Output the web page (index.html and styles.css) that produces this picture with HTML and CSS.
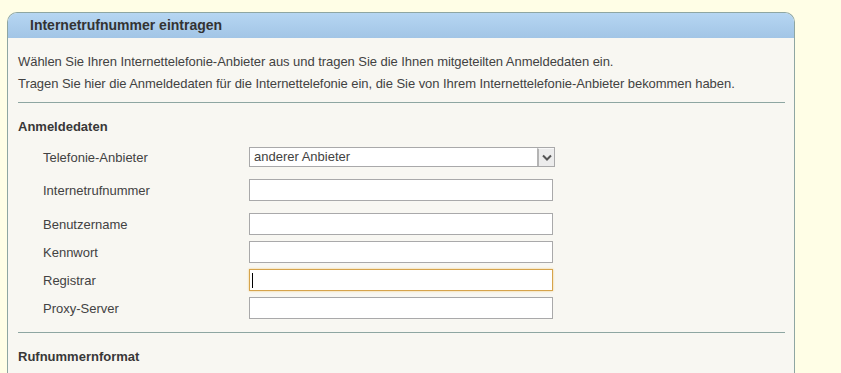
FILE: index.html
```html
<!DOCTYPE html>
<html lang="de">
<head>
    <meta charset="UTF-8">
    <title>Internetrufnummer eintragen</title>
    <link rel="stylesheet" href="styles.css">
</head>
<body>
    <div class="panel">
        <div class="panel-header">
            <h2>Internetrufnummer eintragen</h2>
        </div>
        <div class="panel-body">
            <p class="intro">
                Wählen Sie Ihren Internettelefonie-Anbieter aus und tragen Sie die Ihnen mitgeteilten Anmeldedaten ein.<br>
                Tragen Sie hier die Anmeldedaten für die Internettelefonie ein, die Sie von Ihrem Internettelefonie-Anbieter bekommen haben.
            </p>

            <hr>

            <h3>Anmeldedaten</h3>
            <div class="form-rows">
                <div class="row row-wide">
                    <label>Telefonie-Anbieter</label>
                    <div class="select">
                        <span class="select-value">anderer Anbieter</span>
                        <span class="select-arrow">
                            <svg width="10" height="7" viewBox="0 0 10 7">
                                <path d="M1 1.5 L5 5.5 L9 1.5" fill="none" stroke="#555" stroke-width="2"/>
                            </svg>
                        </span>
                    </div>
                </div>
                <div class="row row-wide">
                    <label>Internetrufnummer</label>
                    <input type="text">
                </div>
                <div class="row">
                    <label>Benutzername</label>
                    <input type="text">
                </div>
                <div class="row">
                    <label>Kennwort</label>
                    <input type="password">
                </div>
                <div class="row">
                    <label>Registrar</label>
                    <div class="focus-wrap">
                        <input type="text" class="focused">
                    </div>
                </div>
                <div class="row">
                    <label>Proxy-Server</label>
                    <input type="text">
                </div>
            </div>

            <hr>

            <h3>Rufnummernformat</h3>
        </div>
    </div>
</body>
</html>
```

FILE: styles.css
```css
* {
    margin: 0;
    padding: 0;
    box-sizing: border-box;
}

body {
    font-family: "Liberation Sans", Arial, sans-serif;
    font-size: 13px;
    color: #424242;
    background: #fffee6;
    height: 373px;
    overflow: hidden;
}

.panel {
    width: 788px;
    margin: 12px 0 0 7px;
    border: 1px solid #8ea6a2;
    border-bottom: none;
    border-radius: 10px 10px 0 0;
    background: #f8f7f2;
}

.panel-header {
    height: 25px;
    border-radius: 9px 9px 0 0;
    background: linear-gradient(#b6d6f2, #a2c5e6);
    padding-left: 22px;
}

.panel-header h2 {
    font-size: 14px;
    line-height: 25px;
    color: #333;
}

.panel-body {
    padding: 13px 9px 20px 10px;
}

.intro {
    line-height: 22px;
    letter-spacing: -0.05px;
}

hr {
    border: none;
    border-top: 1px solid #8ea6a2;
    margin-top: 7px;
}

h3 {
    font-size: 13px;
    line-height: 18px;
    margin-top: 15px;
    color: #383838;
}

.form-rows {
    margin-top: 11px;
    margin-bottom: 13px;
}

.row {
    display: flex;
    align-items: center;
    margin-bottom: 6px;
}

.row-wide {
    margin-bottom: 12px;
}

.row label {
    width: 231px;
    padding-left: 25px;
}

input {
    width: 304px;
    height: 22px;
    border: 1px solid #a9a9aa;
    background: #fff;
    font: inherit;
    outline: none;
}

.focus-wrap {
    position: relative;
}

.focused {
    border-color: #d6a44c;
    box-shadow: 0 0 2px #f2cc80;
}

.focus-wrap::after {
    content: "";
    position: absolute;
    left: 3px;
    top: 4px;
    width: 1px;
    height: 15px;
    background: #000;
}

.select {
    display: flex;
    width: 306px;
    height: 20px;
    border: 1px solid #a9a9aa;
    background: #fff;
}

.select-value {
    flex: 1;
    line-height: 18px;
    padding-left: 4px;
}

.select-arrow {
    width: 17px;
    display: flex;
    align-items: center;
    justify-content: center;
    background: #ececec;
    border-left: 2px solid #b4b4b4;
    border-top: 1px solid #f8f8f8;
}
```
